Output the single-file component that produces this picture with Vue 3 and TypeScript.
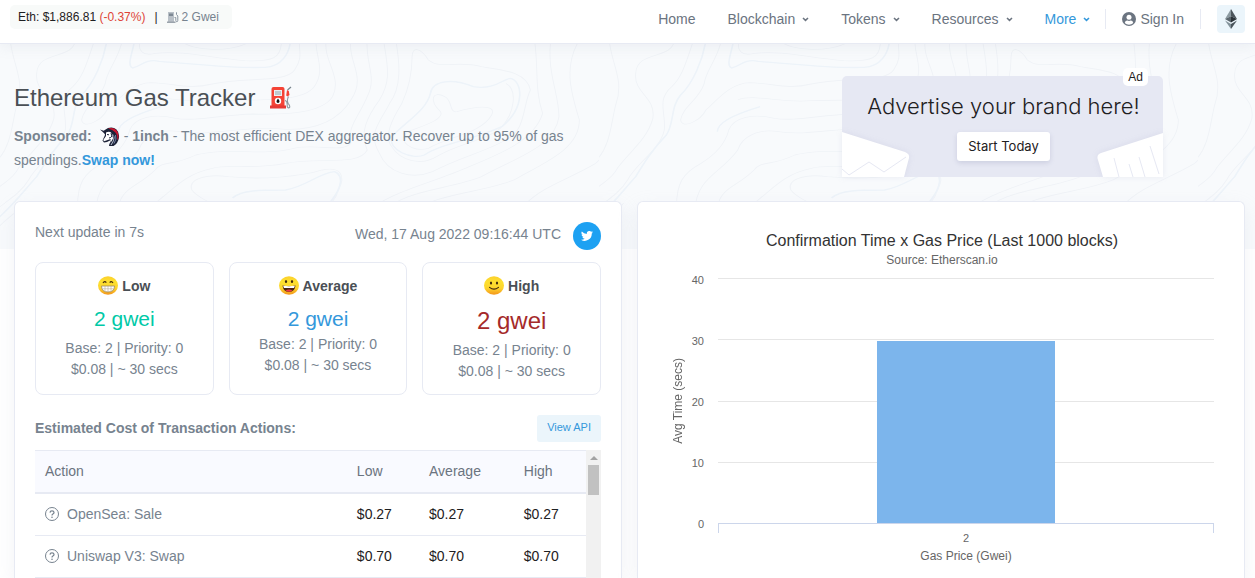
<script setup lang="ts">
interface Tier {
  name: string
  face: 'grin' | 'happy' | 'smile'
  tone: string
  gwei: string
  fees: string
  cost: string
}

interface ActionRow {
  action: string
  low: string
  average: string
  high: string
}

const menus: string[] = ['Blockchain', 'Tokens', 'Resources', 'More']

const tiers: Tier[] = [
  { name: 'Low', face: 'grin', tone: 'low', gwei: '2 gwei', fees: 'Base: 2 | Priority: 0', cost: '$0.08 | ~ 30 secs' },
  { name: 'Average', face: 'happy', tone: 'average', gwei: '2 gwei', fees: 'Base: 2 | Priority: 0', cost: '$0.08 | ~ 30 secs' },
  { name: 'High', face: 'smile', tone: 'high', gwei: '2 gwei', fees: 'Base: 2 | Priority: 0', cost: '$0.08 | ~ 30 secs' },
]

const rows: ActionRow[] = [
  { action: 'OpenSea: Sale', low: '$0.27', average: '$0.27', high: '$0.27' },
  { action: 'Uniswap V3: Swap', low: '$0.70', average: '$0.70', high: '$0.70' },
]

const chartMax = 40
const ticks: number[] = [40, 30, 20, 10]
const bar = { gasPrice: 2, seconds: 30 }
const barHeight = `${(bar.seconds / chartMax) * 100}%`

const contours: string[] = [
  'M25,0 C30,70 62,120 42,190 C30,240 30,320 -10,365',
  'M185,0 C180,60 92,30 90,100 C84,160 140,170 132,235 C118,300 70,340 45,385 C30,420 5,430 -10,450',
  'M232,0 C215,60 205,110 178,140 C140,180 165,220 160,270 C150,330 90,370 70,420 C50,460 20,480 -10,510',
  'M300,0 C290,60 262,90 258,130 C245,180 205,200 200,240 C205,270 250,240 262,210 C290,180 320,130 370,128 C430,130 460,150 520,132 C600,110 700,130 722,90 C745,50 730,30 735,0',
  'M345,0 C335,30 350,50 380,40 C450,30 520,55 600,62 C670,66 690,55 690,0',
  'M440,0 C470,35 570,40 620,0',
  'M340,180 C380,160 440,190 520,182 C620,178 740,190 770,140 C800,90 770,40 775,0',
  'M800,0 C790,60 840,110 815,170 C790,220 700,225 620,222 C540,225 480,245 430,235 C380,220 330,230 318,270 C310,310 290,340 250,370 C205,400 190,430 190,500',
  'M860,0 C850,60 900,110 860,180 C830,240 780,270 700,268 C600,255 520,290 440,275 C390,265 350,290 340,330 C300,400 240,410 235,510',
  'M900,0 C895,70 925,110 900,170 C880,230 850,260 860,310 C840,340 780,310 720,325 C640,350 560,320 480,345 C420,380 400,360 380,390 C340,440 300,440 290,500',
  'M940,0 C950,80 960,120 930,180 C900,230 880,280 900,330 C880,380 780,350 700,370 C620,390 560,370 520,385 C460,400 430,440 400,470 C380,490 370,500 365,510',
  'M970,0 C980,70 985,140 955,190 C930,250 900,280 930,340 C950,400 1010,420 1060,395 C1130,350 1180,340 1240,300 C1290,270 1280,200 1300,150 C1290,90 1220,90 1180,80 C1120,60 1080,90 1050,60 C1030,20 1010,20 1010,50 C1010,110 1000,150 985,190 C960,240 940,290 960,320 C980,360 1030,380 1070,350 C1120,310 1200,300 1230,260 C1260,220 1270,150 1240,130',
  'M1090,170 C1060,150 1050,180 1080,215 C1090,240 1030,260 1000,275 C970,300 1010,340 1050,325 C1100,290 1180,280 1205,225 C1220,190 1160,200 1120,215 C1100,220 1110,180 1090,170',
  'M470,450 C460,420 500,400 560,410 C640,420 740,410 790,390 C830,380 850,400 830,450 C820,490 800,500 780,520',
  'M470,450 C490,480 540,500 570,520',
  'M1310,0 C1320,80 1310,150 1330,220 C1310,300 1230,340 1150,380 C1060,430 940,460 900,520',
  'M1350,0 C1340,100 1370,160 1370,230 C1360,320 1270,350 1180,410 C1100,450 980,450 940,520',
  'M1420,0 C1380,80 1400,160 1420,240 C1420,330 1330,370 1260,420 C1180,460 1060,460 1010,520',
  'M1480,0 C1500,70 1530,130 1512,190 C1500,250 1500,330 1460,370 C1390,420 1330,440 1290,490 C1250,540 1240,590 1230,640',
  'M1520,440 C1480,470 1460,530 1380,560 C1340,580 1330,620 1320,640',
  'M1470,500 C1450,540 1420,590 1400,640',
  'M-10,570 C10,540 40,520 60,490',
]

const boldContours: string[] = [
  'M262,0 C255,60 230,130 200,165 C175,200 185,250 165,285 C130,330 110,370 90,410 C60,450 30,500 -10,540',
  'M330,0 C325,40 310,75 325,84 C345,80 355,55 390,64 C470,70 560,86 650,82 C690,80 710,40 712,0',
  'M570,474 C590,450 640,450 700,450 C750,440 780,400 820,395 C850,410 830,460 800,500',
  'M1250,115 C1230,120 1210,150 1160,140 C1110,115 1060,120 1055,160 C1045,210 1000,240 960,290 C950,330 1010,360 1040,345 C1080,310 1160,300 1230,260 C1290,200 1280,120 1250,115',
  'M290,275 C290,245 340,220 395,200',
]
</script>

<template>
  <div class="page">
    <header class="topbar">
      <div class="ticker">
        <span>Eth: <a class="ticker-price" href="#">$1,886.81</a> <span class="down">(-0.37%)</span></span>
        <span class="bar-sep">|</span>
        <a class="ticker-gas" href="#">
          <svg width="12" height="12" viewBox="0 0 12 12" aria-hidden="true">
            <path d="M1 1h6v10H1z" fill="#b9c0c7" />
            <path d="M0 10.500h8.500V12H0z" fill="#9aa3ab" />
            <path d="M2 2.500h4v2.500H2z" fill="#7d8893" />
            <path d="M7.500 6.500h1.300v3q0 1.200 1 1.200t1-1.200V5l-1.300-1.500V1.300" fill="none" stroke="#8b96a1" />
          </svg>
          2 Gwei
        </a>
      </div>

      <nav class="nav" aria-label="Main">
        <a class="nav-link" href="#">Home</a>
        <button v-for="menu in menus" :key="menu" type="button" class="nav-link" :class="{ active: menu === 'More' }">
          {{ menu }}
          <svg width="7" height="5" viewBox="0 0 7 5" aria-hidden="true">
            <path d="M1 1l2.500 2.400L6 1" fill="none" stroke="currentColor" stroke-width="1.500" />
          </svg>
        </button>
        <a class="sign-in" href="#">
          <svg width="14" height="14" viewBox="0 0 14 14" aria-hidden="true">
            <circle cx="7" cy="7" r="7" fill="#6b7480" />
            <circle cx="7" cy="5.300" r="2.500" fill="#fff" />
            <path d="M2.700 11q.6-2.400 2.500-2.400 1.800.7 3.600 0 1.900 0 2.500 2.400Q9.500 12.800 7 12.800T2.700 11z" fill="#fff" />
          </svg>
          Sign In
        </a>
        <button type="button" class="eth-button" aria-label="Ethereum networks">
          <svg width="12" height="20" viewBox="0 0 12 20" aria-hidden="true">
            <path d="M6 0L0 10l6-2.700z" fill="#8c9aa1" />
            <path d="M6 0l6 10-6-2.700z" fill="#4b555c" />
            <path d="M0 10l6-2.700v6.200z" fill="#5b666d" />
            <path d="M12 10L6 7.300v6.200z" fill="#2b3339" />
            <path d="M0 11.500L6 15v5z" fill="#83929a" />
            <path d="M12 11.500L6 15v5z" fill="#49545b" />
          </svg>
        </button>
      </nav>
    </header>

    <main class="content">
      <svg class="contours" aria-hidden="true">
        <defs>
          <pattern id="contour-tile" width="599" height="210" patternUnits="userSpaceOnUse">
            <g transform="translate(0 -4) scale(.408 .3333)" fill="none" stroke="#f0f3f7">
              <path v-for="d in contours" :key="d" :d="d" stroke-width="2.500" />
              <path v-for="d in boldContours" :key="d" :d="d" stroke="#edf3f9" stroke-width="4" />
            </g>
          </pattern>
        </defs>
        <rect width="100%" height="100%" fill="url(#contour-tile)" />
      </svg>

      <section class="intro">
        <div>
          <h1>
            Ethereum Gas Tracker
            <svg width="23" height="23" viewBox="0 0 23 23" aria-hidden="true">
              <path d="M2.500 20V3q0-2 2-2h9q2 0 2 2v17z" fill="#f44336" />
              <path d="M1 19.500h16v3H1z" fill="#e53935" />
              <path d="M5 4h8v6H5z" fill="#eceff1" />
              <path d="M6 6h6M6 8h6" stroke="#90a4ae" />
              <circle cx="9" cy="15" r="3.200" fill="#fff" />
              <path d="M9 12.500q3 3.700 0 4.500-3-.8 0-4.500z" fill="#111" />
              <path d="M22 1l-3.500 3" fill="none" stroke="#78858d" stroke-width="1.200" />
              <path d="M18 4l1.800 1 .7 4-2 1.500-1.300-1z" fill="#f44336" />
              <path d="M19.500 10.500q-2 4-.3 7 2.500 3 1 4.300-2.300.7-2-3.300.2-3-2-4.300" fill="none" stroke="#8c979e" stroke-width="1.100" />
            </svg>
          </h1>
          <p class="sponsor">
            <b>Sponsored:</b>
            <svg class="unicorn" width="20" height="20" viewBox="0 0 20 20" aria-hidden="true">
              <path d="M4 3.500L8 1q5-1.500 8.500 1.500 3 3 2.500 8-1 6-5.500 8.500L9 19q0-2 1.500-4l.5-2-4 2-3 .5-1.500-2L5 8z" fill="#1c2237" />
              <path d="M8 1.500q5.500-1.500 8.700 2 2.600 3.500 1.500 8.500l-1 1q.5-5-2-7.700T8 1.500z" fill="#c8142e" />
              <path d="M6 5.500q3.500-1.500 5.500.5t1.500 5.500l-2 3.500-.5-3-2.800 1-3.700 1.300-.7-1.300L6 9z" fill="#fff" />
              <path d="M13.500 7q2.500 5-2 11h-1q4-5 3-11z" fill="#c4cde0" />
              <path d="M15.500 8q1.500 4-1.500 8.500" fill="none" stroke="#7382a3" />
              <path d="M0 2.500l6 2L5 7z" fill="#1c2237" />
              <path d="M7 7.500l2 .3M11 6l1 3.500M9 11q2 0 3-2" fill="none" stroke="#1c2237" />
            </svg>
            - <b>1inch</b> - The most efficient DEX aggregator. Recover up to 95% of gas spendings.<a href="#">Swap now!</a>
          </p>
        </div>

        <aside class="ad">
          <svg class="ad-sheet" width="68" height="45" viewBox="0 0 68 45" aria-hidden="true">
            <path d="M0 0l63 20q5 2 4 6l-5 19H0z" fill="#fff" />
            <path d="M0 37l7 6 20-13 15 10 22-15" fill="none" stroke="#e6e8f3" />
          </svg>
          <div class="ad-body">
            <span class="ad-title">Advertise your brand here!</span>
            <button type="button" class="ad-button">Start Today</button>
          </div>
          <svg class="ad-sheet" width="66" height="45" viewBox="0 0 66 45" aria-hidden="true">
            <path d="M66 1L4 21q-5 2-3 7l5 17h60z" fill="#fff" />
            <path d="M17 26l5 19M32 32l4 13M42 25l6 20M53 14l9 28" fill="none" stroke="#e6e8f3" />
          </svg>
          <span class="ad-tag">Ad</span>
        </aside>
      </section>

      <div class="cards">
        <section class="card">
          <div class="card-head">
            <span class="countdown">Next update in 7s</span>
            <span class="stamp">Wed, 17 Aug 2022 09:16:44 UTC</span>
            <a class="twitter" href="#" aria-label="Share on Twitter">
              <svg width="12" height="10" viewBox="0 0 24 20" aria-hidden="true">
                <path d="M24 2.400a10 10 0 0 1-2.800.8A5 5 0 0 0 23.300.5a10 10 0 0 1-3.100 1.200 4.900 4.900 0 0 0-8.400 4.500A14 14 0 0 1 1.700 1a4.900 4.900 0 0 0 1.500 6.600A5 5 0 0 1 1 7a4.900 4.900 0 0 0 3.900 4.900 5 5 0 0 1-2.200.1 4.900 4.900 0 0 0 4.600 3.400A10 10 0 0 1 0 17.400 14 14 0 0 0 21.500 5a10 10 0 0 0 2.500-2.600z" fill="#fff" />
              </svg>
            </a>
          </div>

          <div class="tiers">
            <article v-for="tier in tiers" :key="tier.name" class="tier" :class="tier.tone">
              <h2>
                <svg width="20" height="20" viewBox="0 0 20 20" aria-hidden="true">
                  <defs>
                    <linearGradient :id="`skin-${tier.face}`" x1="0" y1="0" x2="0" y2="1">
                      <stop offset="0" stop-color="#fccf2b" />
                      <stop offset=".3" stop-color="#fde030" />
                      <stop offset=".65" stop-color="#fdd42c" />
                      <stop offset="1" stop-color="#f3941b" />
                    </linearGradient>
                  </defs>
                  <ellipse cx="10" cy="9.500" rx="10" ry="9.300" :fill="`url(#skin-${tier.face})`" />
                  <g v-if="tier.face === 'grin'">
                    <path d="M5 7Q6.700 4.500 8.300 6.700M11.700 6.700q1.600-2.200 3.300.3" fill="none" stroke="#422b0d" stroke-width="1.200" />
                    <path d="M3.500 10h13q0 6-6.500 6t-6.500-6z" fill="#fff" stroke="#a08a5e" stroke-width=".8" />
                    <path d="M4 12.800h12M7 10v5M10 10v6M13 10v5" stroke="#b5aa94" stroke-width=".6" />
                  </g>
                  <g v-else-if="tier.face === 'happy'">
                    <ellipse cx="7" cy="5.500" rx="1.100" ry="1.600" fill="#422b0d" />
                    <ellipse cx="13" cy="5.500" rx="1.100" ry="1.600" fill="#422b0d" />
                    <path d="M3.500 9.500q6.500 1 13 0-.5 6.500-6.500 6.500T3.500 9.500z" fill="#4a2310" />
                    <path d="M4.200 9.700q5.800.9 11.600 0-.2 1.500-.8 2.300H5q-.6-.8-.8-2.300z" fill="#fff" />
                    <path d="M6.500 14.500q3.500-2 7 0-3.500 2.500-7 0z" fill="#ed3a48" />
                  </g>
                  <g v-else>
                    <ellipse cx="7" cy="7" rx="1.100" ry="1.500" fill="#422b0d" />
                    <ellipse cx="13" cy="7" rx="1.100" ry="1.500" fill="#422b0d" />
                    <path d="M5.500 11.300q4.500 3.700 9 0" fill="none" stroke="#422b0d" stroke-width="1.100" stroke-linecap="round" />
                  </g>
                </svg>
                {{ tier.name }}
              </h2>
              <div class="gwei">{{ tier.gwei }}</div>
              <div class="detail">{{ tier.fees }}</div>
              <div class="detail">{{ tier.cost }}</div>
            </article>
          </div>

          <div class="cost-head">
            <h3>Estimated Cost of Transaction Actions:</h3>
            <button type="button" class="api-button">View API</button>
          </div>

          <div class="table-frame">
            <table>
              <thead>
                <tr>
                  <th scope="col" class="col-action">Action</th>
                  <th scope="col" class="col-low">Low</th>
                  <th scope="col" class="col-average">Average</th>
                  <th scope="col">High</th>
                </tr>
              </thead>
              <tbody>
                <tr v-for="row in rows" :key="row.action">
                  <td class="action">
                    <span class="action-name">
                      <svg width="14" height="16" viewBox="0 0 14 16" aria-hidden="true">
                        <circle cx="7" cy="7" r="6.500" fill="none" stroke="#77838f" />
                        <path d="M5 5.600Q5.100 3.800 7 3.800t2 1.600Q9 6.400 7.900 7 7 7.500 7 8.500" fill="none" stroke="#77838f" stroke-width="1.200" />
                        <circle cx="7" cy="10.200" r=".8" fill="#77838f" />
                      </svg>
                      {{ row.action }}
                    </span>
                  </td>
                  <td>{{ row.low }}</td>
                  <td>{{ row.average }}</td>
                  <td>{{ row.high }}</td>
                </tr>
              </tbody>
            </table>
            <div class="scroll-track" aria-hidden="true">
              <span class="scroll-arrow"></span>
              <span class="scroll-thumb"></span>
            </div>
          </div>
        </section>

        <section class="card chart-card">
          <h2 class="chart-title">Confirmation Time x Gas Price (Last 1000 blocks)</h2>
          <p class="chart-source">Source: Etherscan.io</p>
          <div class="chart">
            <span class="y-title">Avg Time (secs)</span>
            <div class="y-labels">
              <span v-for="tick in ticks" :key="tick">{{ tick }}</span>
              <span>0</span>
            </div>
            <div class="plot">
              <div class="grid-lines">
                <i v-for="tick in ticks" :key="tick"></i>
              </div>
              <div class="bars">
                <div class="bar" :style="{ height: barHeight }"></div>
              </div>
            </div>
            <div class="x-axis">
              <span class="x-label">{{ bar.gasPrice }}</span>
              <span class="x-title">Gas Price (Gwei)</span>
            </div>
          </div>
        </section>
      </div>
    </main>
  </div>
</template>

<style>
body {
  margin: 0;
  background: #fff;
}
</style>

<style scoped>
* {
  box-sizing: border-box;
}

.page {
  display: flex;
  flex-direction: column;
  height: 100vh;
  overflow: hidden;
  font: 14px/21px "Liberation Sans", Arial, sans-serif;
  color: #77838f;
}

h1,
h2,
h3,
p {
  margin: 0;
}

a {
  color: #3498db;
  text-decoration: none;
}

button {
  border: 0;
  background: none;
  padding: 0;
  font: inherit;
  color: inherit;
  cursor: pointer;
}

svg {
  flex: none;
}

.topbar {
  position: relative;
  z-index: 1;
  display: flex;
  flex: none;
  justify-content: space-between;
  align-items: flex-start;
  height: 44px;
  padding: 5px 10px 0;
  background: #fff;
  border-bottom: 1px solid #e7eaf3;
  box-shadow: 0 4px 12px rgba(140, 152, 164, 0.1);
}

.ticker {
  display: flex;
  align-items: center;
  gap: 9px;
  height: 24px;
  padding: 0 13px 0 8px;
  border-radius: 5px;
  background: #f8faf9;
  color: #1e2022;
  font-size: 12px;
  white-space: nowrap;
}

.ticker-price {
  color: inherit;
}

.down {
  color: #de4437;
}

.ticker-gas {
  display: flex;
  align-items: center;
  gap: 3px;
  color: #77838f;
}

.nav {
  display: flex;
  align-items: center;
  height: 28px;
  white-space: nowrap;
  color: #6b7480;
}

.nav-link {
  display: flex;
  align-items: center;
  gap: 7px;
  margin-right: 32px;
  color: inherit;
}

.nav-link.active {
  margin-right: 15px;
  color: #3498db;
}

.sign-in {
  display: flex;
  align-items: center;
  gap: 4px;
  height: 20px;
  margin-right: 16px;
  padding: 0 16px;
  border: solid #e7eaf3;
  border-width: 0 1px;
  color: inherit;
}

.eth-button {
  display: grid;
  place-items: center;
  width: 28px;
  height: 28px;
  border-radius: 4px;
  background: #ebf5fb;
}

.content {
  position: relative;
  display: flex;
  flex: 1;
  flex-direction: column;
  padding: 0 10px 0 14px;
}

.contours {
  position: absolute;
  top: 0;
  left: 0;
  z-index: -1;
  width: 100%;
  height: 205px;
  background: #f8fafc;
}

.intro {
  display: grid;
  grid-template-columns: 1fr 1fr;
  gap: 15px;
  flex: none;
  height: 157px;
  padding-top: 32px;
}

h1 {
  display: flex;
  align-items: center;
  gap: 14px;
  height: 42px;
  color: #4a4f55;
  font-size: 24px;
  font-weight: 400;
}

.sponsor {
  padding-top: 6px;
  line-height: 24px;
}

.sponsor a {
  font-weight: 700;
}

.unicorn {
  margin-left: 8px;
  vertical-align: middle;
}

.ad {
  position: relative;
  display: flex;
  justify-content: space-between;
  align-items: flex-end;
  justify-self: end;
  width: 321px;
  height: 101px;
  margin-right: 82px;
  border-radius: 5px;
  background: #e6e8f3;
}

.ad-sheet {
  filter: drop-shadow(0 0 3px rgba(120, 125, 170, 0.12));
}

.ad-body {
  display: flex;
  flex-direction: column;
  align-items: center;
  align-self: flex-start;
  gap: 11px;
  width: 0;
  padding-top: 15px;
  color: #1e2022;
  font-family: Inter, sans-serif;
  white-space: nowrap;
}

.ad-title {
  font-size: 22px;
  font-weight: 300;
  line-height: 30px;
}

.ad-button {
  z-index: 1;
  height: 29px;
  padding: 0 11px;
  border-radius: 3px;
  background: #fff;
  box-shadow: 0 2px 5px rgba(100, 105, 150, 0.2);
  font-size: 13px;
}

.ad-tag {
  position: absolute;
  top: -8px;
  right: 15px;
  padding: 0 5px;
  border-radius: 5px;
  background: #fff;
  color: #1e2022;
  font-size: 12px;
  line-height: 18px;
}

.cards {
  display: grid;
  grid-template-columns: minmax(0, 1fr) minmax(0, 1fr);
  gap: 15px;
  flex: 1;
}

.card {
  display: flex;
  flex-direction: column;
  padding: 20px 20px 0;
  border: 1px solid #e7eaf3;
  border-bottom: 0;
  border-radius: 6px 6px 0 0;
  background: #fff;
  box-shadow: 0 8px 20px rgba(189, 197, 209, 0.2);
}

.card-head {
  display: flex;
  align-items: flex-start;
  height: 28px;
  margin-bottom: 12px;
}

.countdown {
  flex: 1;
  line-height: 20px;
}

.stamp {
  margin-right: 12px;
  line-height: 24px;
}

.twitter {
  display: grid;
  place-items: center;
  width: 28px;
  height: 28px;
  border-radius: 50%;
  background: #1da1f2;
}

.tiers {
  display: grid;
  grid-template-columns: repeat(3, 1fr);
  gap: 15px;
  margin-bottom: 20px;
}

.tier {
  padding: 11px 0 12px;
  border: 1px solid #e7eaf3;
  border-radius: 8px;
  text-align: center;
}

.tier h2 {
  display: flex;
  justify-content: center;
  align-items: center;
  gap: 4px;
  height: 24px;
  margin-bottom: 6px;
  color: #4a4f55;
  font-size: 14px;
}

.gwei {
  font-size: 21px;
  line-height: 30px;
}

.low .gwei {
  margin-bottom: 4px;
  color: #00c9a7;
}

.average .gwei {
  color: #3498db;
}

.high .gwei {
  margin-bottom: 2px;
  color: #a52a2a;
  font-size: 24px;
  line-height: 34px;
}

.cost-head {
  display: flex;
  justify-content: space-between;
  align-items: center;
  margin-bottom: 8px;
}

.cost-head h3 {
  font-size: 14px;
}

.api-button {
  height: 27px;
  padding: 0 10px 2px;
  border-radius: 3px;
  background: #ebf5fb;
  color: #3498db;
  font-size: 11px;
}

.table-frame {
  display: flex;
  flex: 1;
}

table {
  flex: 1;
  align-self: flex-start;
  border-collapse: separate;
  border-spacing: 0;
  table-layout: fixed;
}

th,
td {
  height: 42px;
  padding: 0 10px;
  border-bottom: 1px solid #e7eaf3;
  color: #1e2022;
  font-weight: 400;
  text-align: left;
}

th {
  height: 44px;
  border-top: 1px solid #e7eaf3;
  border-bottom-width: 2px;
  background: #f9faff;
  color: #6b7480;
}

.col-action {
  width: 56.600%;
}

.col-low {
  width: 13.100%;
}

.col-average {
  width: 17.200%;
}

.action {
  color: #77838f;
}

.action-name {
  display: flex;
  align-items: center;
  gap: 8px;
}

.scroll-track {
  display: flex;
  flex-direction: column;
  align-items: center;
  width: 15px;
  background: #f1f1f1;
}

.scroll-arrow {
  margin: 6px 0 5px;
  border: 4px solid transparent;
  border-top: 0;
  border-bottom-color: #a3a3a3;
}

.scroll-thumb {
  width: 11px;
  height: 30px;
  background: #c1c1c1;
}

.chart-card {
  padding: 29px 30px 0 32px;
}

.chart-title {
  color: #333;
  font-size: 16px;
  font-weight: 400;
  line-height: 20px;
  text-align: center;
}

.chart-source {
  margin-bottom: 9px;
  color: #666;
  font-size: 12px;
  line-height: 18px;
  text-align: center;
}

.chart {
  display: grid;
  grid-template-columns: 16px 18px 1fr;
  grid-template-rows: 245px auto;
  color: #666;
  font-size: 12px;
}

.y-title {
  align-self: center;
  line-height: 16px;
  text-align: center;
  writing-mode: vertical-rl;
  transform: rotate(180deg);
}

.y-labels {
  display: flex;
  flex-direction: column;
  gap: 41px;
  margin-top: -8px;
  font-size: 11px;
  line-height: 20px;
  text-align: right;
}

.plot {
  display: grid;
  margin-left: 14px;
}

.grid-lines,
.bars {
  grid-area: 1 / 1;
}

.grid-lines {
  display: grid;
  grid-template-rows: repeat(4, 1fr);
}

.grid-lines i {
  border-top: 1px solid #e6e6e6;
}

.bars {
  display: flex;
  justify-content: center;
  align-items: flex-end;
  padding-top: 2px;
}

.bar {
  width: 36%;
  background: #7cb5ec;
}

.x-axis {
  display: flex;
  flex-direction: column;
  grid-column: 3;
  align-items: center;
  margin-left: 14px;
}

.x-axis::before {
  content: "";
  align-self: stretch;
  height: 9px;
  border: 1px solid #ccd6eb;
  border-bottom: 0;
}

.x-label {
  font-size: 11px;
  line-height: 10px;
}

.x-title {
  margin-top: 3px;
  line-height: 20px;
}
</style>
